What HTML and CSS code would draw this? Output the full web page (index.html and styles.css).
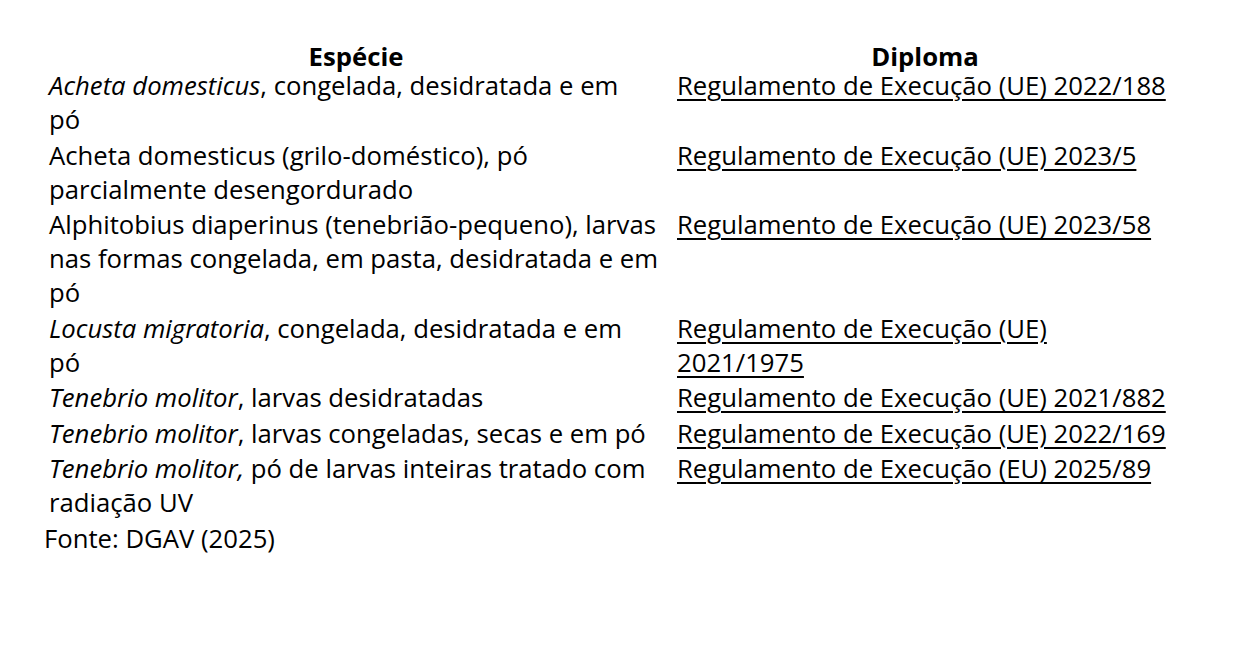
FILE: index.html
```html
<!DOCTYPE html>
<html lang="pt">
<head>
<meta charset="utf-8">
<title>Insetos autorizados</title>
<link rel="stylesheet" href="styles.css">
</head>
<body>
<main class="page">
  <table class="species">
    <colgroup>
      <col class="col-species">
      <col class="col-law">
    </colgroup>
    <thead>
      <tr><th>Espécie</th><th>Diploma</th></tr>
    </thead>
    <tbody>
      <tr>
        <td><i>Acheta domesticus</i>, congelada, desidratada e em<br>pó</td>
        <td><a href="#">Regulamento de Execução (UE) 2022/188</a></td>
      </tr>
      <tr>
        <td>Acheta domesticus (grilo-doméstico), pó<br>parcialmente desengordurado</td>
        <td><a href="#">Regulamento de Execução (UE) 2023/5</a></td>
      </tr>
      <tr>
        <td>Alphitobius diaperinus (tenebrião-pequeno), larvas<br>nas formas congelada, em pasta, desidratada e em<br>pó</td>
        <td><a href="#">Regulamento de Execução (UE) 2023/58</a></td>
      </tr>
      <tr>
        <td><i>Locusta migratoria</i>, congelada, desidratada e em<br>pó</td>
        <td><a href="#">Regulamento de Execução (UE)<br>2021/1975</a></td>
      </tr>
      <tr>
        <td><i>Tenebrio molitor</i>, larvas desidratadas</td>
        <td><a href="#">Regulamento de Execução (UE) 2021/882</a></td>
      </tr>
      <tr>
        <td><i>Tenebrio molitor</i>, larvas congeladas, secas e em pó</td>
        <td><a href="#">Regulamento de Execução (UE) 2022/169</a></td>
      </tr>
      <tr>
        <td><i>Tenebrio molitor,</i> pó de larvas inteiras tratado com<br>radiação UV</td>
        <td><a href="#">Regulamento de Execução (EU) 2025/89</a></td>
      </tr>
    </tbody>
  </table>
  <p class="source">Fonte: DGAV (2025)</p>
</main>
</body>
</html>
```

FILE: styles.css
```css
html, body {
  margin: 0;
  background: #ffffff;
}

body {
  color: #000000;
  font-family: "Open Sans", "Noto Sans", sans-serif;
  font-size: 25.7px;
}

.page {
  padding: 45px 0 0 42px;
}

.species {
  border-collapse: collapse;
  table-layout: fixed;
  width: 1138px;
}

.col-species {
  width: 628px;
}

.col-law {
  width: 510px;
}

.species th {
  font-weight: 700;
  line-height: 24px;
  padding: 0 7px;
  text-align: center;
}

.species td {
  line-height: 34px;
  padding: 0 7px 1.5px;
  vertical-align: top;
  text-align: left;
  white-space: nowrap;
}

.species a {
  color: #000000;
  text-decoration: underline;
  text-decoration-thickness: 2px;
  text-underline-offset: 4px;
}

.source {
  margin: 0 0 0 2px;
  line-height: 34px;
}
```
